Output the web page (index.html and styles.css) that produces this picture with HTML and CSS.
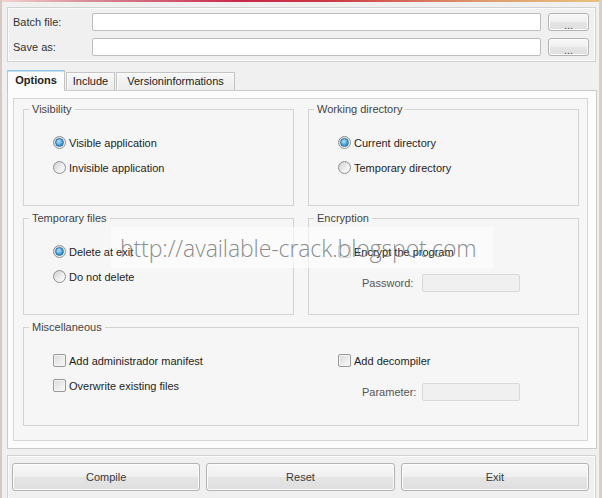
FILE: index.html
```html
<!DOCTYPE html>
<html lang="en">
  <head>
    <meta charset="UTF-8" />
    <meta name="viewport" content="width=device-width, initial-scale=1.0" />
    <title>Bat To Exe Converter</title>
    <link rel="stylesheet" href="styles.css">
  </head>
  <body>
    <div class="window">
      <!-- 文件路径 -->
      <div class="box files">
        <label class="lbl">Batch file:</label>
        <input class="text" type="text">
        <button class="btn dots">...</button>
        <label class="lbl">Save as:</label>
        <input class="text" type="text">
        <button class="btn dots">...</button>
      </div>

      <!-- 选项卡 -->
      <ul class="tab">
        <li class="active">Options</li>
        <li class="w-include">Include</li>
        <li class="w-version">Versioninformations</li>
      </ul>
      <div class="panel">
        <div class="sheet">
          <fieldset class="group">
            <legend>Visibility</legend>
            <div class="opts">
              <div class="opt"><span class="radio on"></span>Visible application</div>
              <div class="opt"><span class="radio"></span>Invisible application</div>
            </div>
          </fieldset>
          <fieldset class="group">
            <legend>Working directory</legend>
            <div class="opts">
              <div class="opt"><span class="radio on"></span>Current directory</div>
              <div class="opt"><span class="radio"></span>Temporary directory</div>
            </div>
          </fieldset>
          <fieldset class="group">
            <legend>Temporary files</legend>
            <div class="opts">
              <div class="opt"><span class="radio on"></span><span class="over">Delete at exit</span></div>
              <div class="opt"><span class="radio"></span>Do not delete</div>
            </div>
          </fieldset>
          <fieldset class="group">
            <legend>Encryption</legend>
            <div class="opts">
              <div class="opt"><span class="check"></span><span class="over">Encrypt the program</span></div>
              <div class="field">
                <span class="field-lbl">Password:</span>
                <input class="text off" type="text" disabled>
              </div>
            </div>
          </fieldset>
          <fieldset class="group wide">
            <legend>Miscellaneous</legend>
            <div class="opts cols">
              <div class="col left">
                <div class="opt"><span class="check"></span>Add administrador manifest</div>
                <div class="opt"><span class="check"></span>Overwrite existing files</div>
              </div>
              <div class="col">
                <div class="opt"><span class="check"></span>Add decompiler</div>
                <div class="field">
                  <span class="field-lbl">Parameter:</span>
                  <input class="text off" type="text" disabled>
                </div>
              </div>
            </div>
          </fieldset>
        </div>
      </div>

      <!-- 底部按钮 -->
      <div class="box footer">
        <button class="btn">Compile</button>
        <button class="btn">Reset</button>
        <button class="btn">Exit</button>
      </div>

      <!-- 水印：白底在文字下面，手写网址在文字上面 -->
      <div class="mark"><span class="mark-text">http://available-crack.blogspot.com</span></div>
    </div>
  </body>
</html>
```

FILE: styles.css
```css
/* 样式初始化 */
* {
  margin: 0;
  padding: 0;
  box-sizing: border-box;
}

body {
  font-family: "Liberation Sans", Arial, sans-serif;
  font-size: 11px;
  color: #1e1e1e;
  background-color: #f0f0f0;
}

/* 窗口边框，顶部是标题栏的彩色渐变 */
.window {
  position: relative;
  width: 602px;
  height: 498px;
  overflow: hidden;
  padding: 0 2px 0 5px;
  border-left: 2px solid #d8c8c4;
  border-right: 3px solid #d6d0c8;
  background: linear-gradient(to right, #efd2ce, #d98a98 15%, #c8284a 40%, #cc3848 55%, #de9a6c 80%, #e8c27e) top / 100% 2px no-repeat, #f0f0f0;
}

/* 带白色内线的灰框 */
.box {
  border: 1px solid #d2d2d2;
  box-shadow: inset 0 0 0 1px #fbfbfb;
  margin-right: 1px;
}

/* 文件路径区 */
.files {
  margin-top: 7px;
  display: grid;
  grid-template-columns: 72px 1fr 41px;
  gap: 7px;
  align-items: center;
  padding: 5px 6px 5px 5px;
}
.lbl {
  color: #333;
}
.text {
  height: 18px;
  border: 1px solid #bdbdbd;
  border-radius: 2px;
  background-color: #fff;
  font: inherit;
  outline: none;
}
.text.off {
  width: 98px;
  background-color: #f0f0f0;
  border-color: #d9d9d9;
}

/* 按钮 */
.btn {
  height: 18px;
  border: 1px solid #b3b3b3;
  border-radius: 3px;
  background: linear-gradient(#f8f8f8, #efefef 50%, #e5e5e5 51%, #dfdfdf);
  box-shadow: inset 0 0 0 1px #fcfcfc;
  font: inherit;
  color: #3a3a3a;
}
.btn.dots {
  line-height: 18px;
  padding-top: 2px;
  color: #4a4a6a;
}

/* 导航区 */
.tab {
  margin-top: 8px;
  height: 20px;
  display: flex;
  align-items: flex-end;
}
.tab li {
  list-style-type: none;
  width: 58px;
  height: 18px;
  line-height: 16px;
  text-align: center;
  border: 1px solid #c4c4c4;
  border-bottom: none;
  background: linear-gradient(#f7f7f7, #ececec);
  box-shadow: inset 1px 1px 0 #fcfcfc;
  color: #222;
  cursor: default;
}
.tab li.active {
  position: relative;
  z-index: 1;
  height: 21px;
  margin-bottom: -1px;
  line-height: 19px;
  font-weight: bold;
  border-top-color: #8fc6e4;
  background: #fcfcfc;
  box-shadow: inset 0 1px 0 #c4e2f2;
}
.tab li.w-include {
  width: 49px;
  margin-left: 1px;
}
.tab li.w-version {
  width: 119px;
  margin-left: 1px;
}

/* 内容区 */
.panel {
  height: 359px;
  padding: 7px 8px 7px 5px;
  border: 1px solid #cbcbcb;
  background-color: #fcfcfc;
}
.sheet {
  height: 343px;
  display: grid;
  grid-template-columns: 271px 271px;
  grid-template-rows: 103px 103px 105px;
  column-gap: 14px;
  row-gap: 6px;
  padding: 4px 8px 14px 9px;
  border: 1px solid #d6d6d6;
  background-color: #f6f6f6;
}

/* 分组框 */
.group {
  min-width: 0;
  border: 1px solid #d3d3d3;
  padding: 0;
}
.group.wide {
  grid-column: 1 / -1;
}
.group legend {
  margin-left: 5px;
  padding: 0 3px;
  line-height: 13px;
  color: #444;
}
.opts {
  padding: 14px 0 0 29px;
}
.opt {
  height: 25px;
  display: flex;
  align-items: center;
  gap: 3px;
}
.cols {
  display: flex;
}
.col.left {
  width: 285px;
}

/* 被水印压住的文字仍然在白底上面 */
.over {
  position: relative;
  z-index: 2;
}

/* 单选框和复选框 */
.radio {
  width: 13px;
  height: 13px;
  border-radius: 50%;
  border: 1px solid #8e8f8f;
  background: linear-gradient(135deg, #d0d0d0, #f0f0f0 60%, #fdfdfd);
  display: grid;
  place-items: center;
}
.radio.on::after {
  content: "";
  width: 7px;
  height: 7px;
  border-radius: 50%;
  border: 1px solid #2b6fa0;
  background: radial-gradient(circle at 40% 35%, #b8e4fa, #4aa3dc 55%, #1d6aa8);
}
.check {
  width: 13px;
  height: 13px;
  border: 1px solid #999;
  border-radius: 2px;
  background: linear-gradient(135deg, #d8d8d8, #eeeeee 60%, #f8f8f8);
  box-shadow: inset 0 0 0 1px #f4f4f4;
}

/* 密码和参数输入 */
.field {
  margin: 10px 0 0 24px;
  display: flex;
  align-items: center;
}
.field-lbl {
  width: 60px;
  color: #555;
}

/* 底部按钮区 */
.footer {
  margin-top: 6px;
  display: grid;
  grid-template-columns: repeat(3, 1fr);
  gap: 6px;
  padding: 7px 6px 10px 4px;
}
.footer .btn {
  height: 28px;
}

/* 水印：半透明白底的手写网址 */
.mark {
  position: absolute;
  left: 109px;
  top: 227px;
  width: 382px;
  height: 41px;
  padding-left: 9px;
  line-height: 43px;
  background-color: rgba(255, 255, 255, 0.6);
  white-space: nowrap;
}
.mark-text {
  position: relative;
  z-index: 3;
  font-family: "Open Sans", "Liberation Sans", sans-serif;
  font-weight: 300;
  font-size: 23px;
  letter-spacing: -0.1px;
  color: rgba(110, 110, 110, 0.8);
}
```
